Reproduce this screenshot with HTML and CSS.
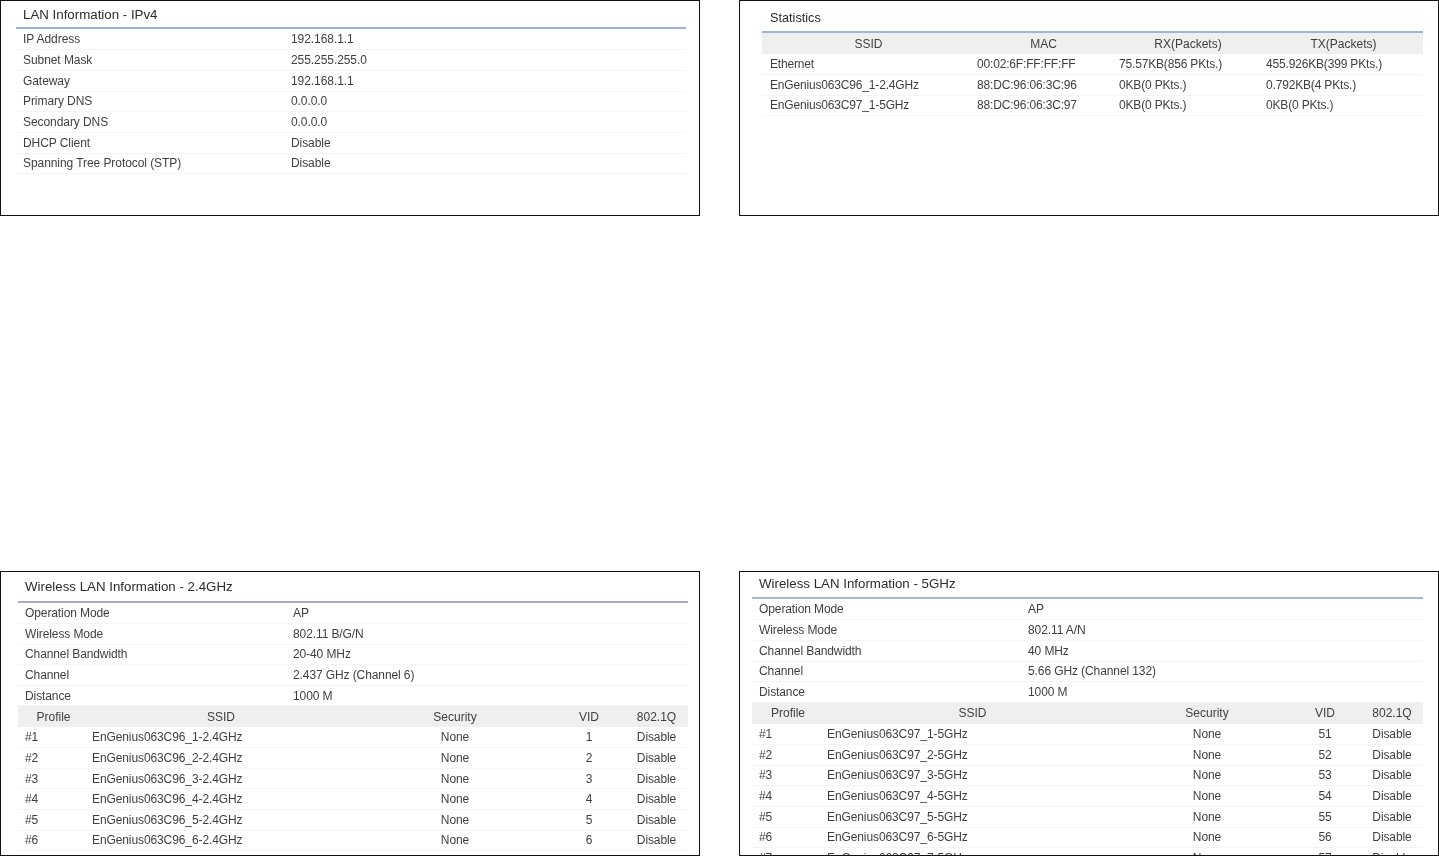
FILE: index.html
```html
<!DOCTYPE html>
<html lang="en">
<head>
<meta charset="utf-8">
<title>Device Status</title>
<link rel="stylesheet" href="styles.css">
</head>
<body>
<main class="board">
  <section class="panel panel-lan">
    <div class="inner">
      <h2 class="title">LAN Information - IPv4</h2>
      <table class="tbl kv">
        <colgroup><col class="c-lan-k"><col></colgroup>
        <tr><td>IP Address</td><td>192.168.1.1</td></tr>
        <tr><td>Subnet Mask</td><td>255.255.255.0</td></tr>
        <tr><td>Gateway</td><td>192.168.1.1</td></tr>
        <tr><td>Primary DNS</td><td>0.0.0.0</td></tr>
        <tr><td>Secondary DNS</td><td>0.0.0.0</td></tr>
        <tr><td>DHCP Client</td><td>Disable</td></tr>
        <tr><td>Spanning Tree Protocol (STP)</td><td>Disable</td></tr>
      </table>
    </div>
  </section>

  <section class="panel panel-stats">
    <div class="inner">
      <h2 class="title">Statistics</h2>
      <table class="tbl">
        <colgroup><col class="c-st-1"><col class="c-st-2"><col class="c-st-3"><col></colgroup>
        <tr class="head"><th>SSID</th><th>MAC</th><th>RX(Packets)</th><th>TX(Packets)</th></tr>
        <tr><td>Ethernet</td><td>00:02:6F:FF:FF:FF</td><td>75.57KB(856 PKts.)</td><td>455.926KB(399 PKts.)</td></tr>
        <tr><td>EnGenius063C96_1-2.4GHz</td><td>88:DC:96:06:3C:96</td><td>0KB(0 PKts.)</td><td>0.792KB(4 PKts.)</td></tr>
        <tr><td>EnGenius063C97_1-5GHz</td><td>88:DC:96:06:3C:97</td><td>0KB(0 PKts.)</td><td>0KB(0 PKts.)</td></tr>
      </table>
    </div>
  </section>

  <section class="panel panel-w24">
    <div class="inner">
      <h2 class="title">Wireless LAN Information - 2.4GHz</h2>
      <table class="tbl kv">
        <colgroup><col class="c-w-k"><col></colgroup>
        <tr><td>Operation Mode</td><td>AP</td></tr>
        <tr><td>Wireless Mode</td><td>802.11 B/G/N</td></tr>
        <tr><td>Channel Bandwidth</td><td>20-40 MHz</td></tr>
        <tr><td>Channel</td><td>2.437 GHz (Channel 6)</td></tr>
        <tr><td>Distance</td><td>1000 M</td></tr>
      </table>
      <table class="tbl profiles">
        <colgroup><col class="c-p-1"><col class="c-p24-2"><col class="c-p24-3"><col class="c-p-4"><col></colgroup>
        <tr class="head"><th>Profile</th><th>SSID</th><th>Security</th><th>VID</th><th>802.1Q</th></tr>
        <tr><td>#1</td><td>EnGenius063C96_1-2.4GHz</td><td>None</td><td>1</td><td>Disable</td></tr>
        <tr><td>#2</td><td>EnGenius063C96_2-2.4GHz</td><td>None</td><td>2</td><td>Disable</td></tr>
        <tr><td>#3</td><td>EnGenius063C96_3-2.4GHz</td><td>None</td><td>3</td><td>Disable</td></tr>
        <tr><td>#4</td><td>EnGenius063C96_4-2.4GHz</td><td>None</td><td>4</td><td>Disable</td></tr>
        <tr><td>#5</td><td>EnGenius063C96_5-2.4GHz</td><td>None</td><td>5</td><td>Disable</td></tr>
        <tr><td>#6</td><td>EnGenius063C96_6-2.4GHz</td><td>None</td><td>6</td><td>Disable</td></tr>
      </table>
    </div>
  </section>

  <section class="panel panel-w5">
    <div class="inner">
      <h2 class="title">Wireless LAN Information - 5GHz</h2>
      <table class="tbl kv">
        <colgroup><col class="c-w5-k"><col></colgroup>
        <tr><td>Operation Mode</td><td>AP</td></tr>
        <tr><td>Wireless Mode</td><td>802.11 A/N</td></tr>
        <tr><td>Channel Bandwidth</td><td>40 MHz</td></tr>
        <tr><td>Channel</td><td>5.66 GHz (Channel 132)</td></tr>
        <tr><td>Distance</td><td>1000 M</td></tr>
      </table>
      <table class="tbl profiles">
        <colgroup><col class="c-p5-1"><col class="c-p5-2"><col class="c-p5-3"><col class="c-p-4"><col></colgroup>
        <tr class="head"><th>Profile</th><th>SSID</th><th>Security</th><th>VID</th><th>802.1Q</th></tr>
        <tr><td>#1</td><td>EnGenius063C97_1-5GHz</td><td>None</td><td>51</td><td>Disable</td></tr>
        <tr><td>#2</td><td>EnGenius063C97_2-5GHz</td><td>None</td><td>52</td><td>Disable</td></tr>
        <tr><td>#3</td><td>EnGenius063C97_3-5GHz</td><td>None</td><td>53</td><td>Disable</td></tr>
        <tr><td>#4</td><td>EnGenius063C97_4-5GHz</td><td>None</td><td>54</td><td>Disable</td></tr>
        <tr><td>#5</td><td>EnGenius063C97_5-5GHz</td><td>None</td><td>55</td><td>Disable</td></tr>
        <tr><td>#6</td><td>EnGenius063C97_6-5GHz</td><td>None</td><td>56</td><td>Disable</td></tr>
        <tr><td>#7</td><td>EnGenius063C97_7-5GHz</td><td>None</td><td>57</td><td>Disable</td></tr>
      </table>
    </div>
  </section>
</main>
</body>
</html>
```
FILE: styles.css
```css
* { box-sizing: border-box; }

html, body {
  margin: 0;
  padding: 0;
  height: 856px;
  overflow: hidden;
  background: #fff;
}

.board {
  display: grid;
  grid-template-columns: 700px 700px;
  grid-template-rows: 216px 285px;
  column-gap: 39px;
  row-gap: 355px;
  font-family: "Liberation Sans", Arial, sans-serif;
  font-size: 12px;
  color: #3f3f3f;
}

.panel {
  border: 1px solid #111;
  overflow: hidden;
  background: #fff;
}

.inner {
  filter: blur(0.4px);
}

.panel-lan .inner { padding: 0 13px 0 15px; }
.panel-stats .inner { padding: 0 15px 0 22px; }
.panel-w24 .inner { padding: 0 11px 0 17px; }
.panel-w5 .inner { padding: 0 15px 0 12px; }

.title {
  margin: 0;
  padding: 0 0 0 7px;
  height: 28px;
  font-size: 13.3px;
  font-weight: 400;
  line-height: 27px;
  color: #2c2c2c;
  border-bottom: 2px solid #9db3dc;
}

.panel-stats .title {
  height: 32px;
  padding-left: 8px;
  line-height: 34px;
  font-size: 12.7px;
}
.panel-w24 .title { height: 31px; line-height: 30px; border-bottom-color: #a7a9c9; }
.panel-w5 .title { height: 27px; line-height: 24px; border-bottom-color: #a9b5d2; }

.tbl {
  width: 100%;
  table-layout: fixed;
  border-collapse: collapse;
}

.tbl td,
.tbl th {
  height: 20.7px;
  padding: 0 0 0 7px;
  font-weight: 400;
  line-height: 14px;
  text-align: left;
  white-space: nowrap;
  border-bottom: 1px solid #f4f4f4;
}

.panel-lan td { letter-spacing: -0.07px; }
.panel-stats td { letter-spacing: -0.17px; }
.panel-stats td:first-child { padding-left: 8px; }
.panel-w24 td,
.panel-w5 td { letter-spacing: -0.1px; }
.panel-w24 .tbl td,
.panel-w24 .tbl th { height: 20.6px; }

.tbl .head th {
  padding: 0;
  text-align: center;
  background: #efefef;
  border-bottom: 0;
}

.panel-stats .head th { padding: 2px 0 0 5px; }
.profiles .head th:first-child { padding-left: 4px; }

.profiles td:nth-child(n+3) {
  padding: 0;
  text-align: center;
}

.c-lan-k { width: 268px; }
.c-w-k { width: 268px; }
.c-w5-k { width: 269px; }
.c-st-1 { width: 208px; }
.c-st-2 { width: 142px; }
.c-st-3 { width: 147px; }
.c-p-1 { width: 67px; }
.c-p24-2 { width: 272px; }
.c-p24-3 { width: 196px; }
.c-p5-1 { width: 68px; }
.c-p5-2 { width: 305px; }
.c-p5-3 { width: 164px; }
.c-p-4 { width: 72px; }
```
